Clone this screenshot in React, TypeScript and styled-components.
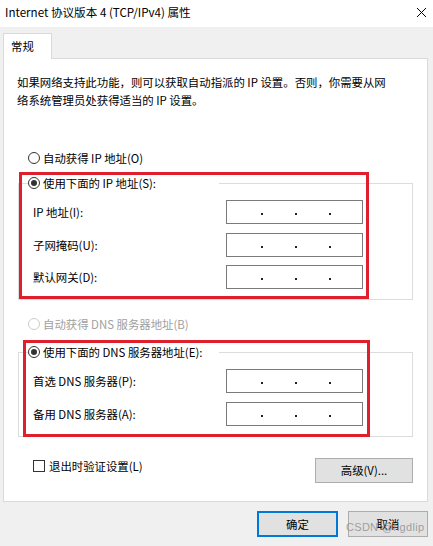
import React from "react";
import styled, { createGlobalStyle } from "styled-components";

const FONT = `"Noto Sans CJK SC", "Noto Sans", sans-serif`;

const GlobalStyle = createGlobalStyle`
  html, body {
    margin: 0;
    padding: 0;
    background: #f0f0f0;
  }
  body {
    font-family: ${FONT};
    font-size: 11.4px;
    color: #000;
  }
`;

type Box = { $x: number; $y: number; $w: number; $h: number };

const IP_ROWS = ["IP 地址(I):", "子网掩码(U):", "默认网关(D):"];
const DNS_ROWS = ["首选 DNS 服务器(P):", "备用 DNS 服务器(A):"];

const CloseIcon = () => (
  <svg width="11" height="11" viewBox="0 0 11 11">
    <path d="M1 1 L10 10 M10 1 L1 10" stroke="#000" strokeWidth="1" fill="none" />
  </svg>
);

const Radio = ({ checked, disabled }: { checked?: boolean; disabled?: boolean }) => (
  <RadioCircle $disabled={disabled}>{checked && <RadioDot />}</RadioCircle>
);

const IpInput = () => (
  <IpBox>
    <Octet />
    <Dot />
    <Octet />
    <Dot />
    <Octet />
    <Dot />
    <Octet />
  </IpBox>
);

const AddressGroup = ({
  legend,
  rows,
  mark
}: {
  legend: string;
  rows: string[];
  mark: Box;
}) => (
  <Section>
    <Group>
      <Legend>
        <Radio checked />
        <OptionText>{legend}</OptionText>
      </Legend>
      <Rows>
        {rows.map(label => (
          <Field key={label}>
            <FieldLabel>{label}</FieldLabel>
            <IpInput />
          </Field>
        ))}
      </Rows>
    </Group>
    <Highlight $x={mark.$x} $y={mark.$y} $w={mark.$w} $h={mark.$h} />
  </Section>
);

export default function App() {
  return (
    <>
      <GlobalStyle />
      <Window>
        <TitleBar>
          <Title>Internet 协议版本 4 (TCP/IPv4) 属性</Title>
          <CloseButton>
            <CloseIcon />
          </CloseButton>
        </TitleBar>

        <Body>
          <TabStrip>
            <Tab>常规</Tab>
          </TabStrip>

          <Panel>
            <Description>
              如果网络支持此功能，则可以获取自动指派的 IP 设置。否则，你需要从网
              <br />
              络系统管理员处获得适当的 IP 设置。
            </Description>

            <Option $top={41}>
              <Radio />
              <OptionText>自动获得 IP 地址(O)</OptionText>
            </Option>

            <Spacer $h={9} />
            <AddressGroup
              legend="使用下面的 IP 地址(S):"
              rows={IP_ROWS}
              mark={{ $x: 1, $y: -3, $w: 350, $h: 127 }}
            />

            <Option $top={16}>
              <Radio disabled />
              <OptionText $disabled>自动获得 DNS 服务器地址(B)</OptionText>
            </Option>

            <Spacer $h={12} />
            <AddressGroup
              legend="使用下面的 DNS 服务器地址(E):"
              rows={DNS_ROWS}
              mark={{ $x: 5, $y: -4, $w: 347, $h: 97 }}
            />

            <FooterRow>
              <CheckLabel>
                <CheckBox />
                <span>退出时验证设置(L)</span>
              </CheckLabel>
              <Button $w={98}>高级(V)...</Button>
            </FooterRow>
          </Panel>

          <ButtonBar>
            <Button $w={81} $h={26} $primary>
              确定
            </Button>
            <Button $w={80} $h={26}>
              取消
            </Button>
          </ButtonBar>
        </Body>

        <Watermark>CSDN @hgdlip</Watermark>
      </Window>
    </>
  );
}

const Window = styled.div`
  position: relative;
  width: 433px;
  height: 546px;
  background: #f0f0f0;
  overflow: hidden;
`;

const TitleBar = styled.div`
  height: 27px;
  background: #fff;
  display: flex;
  align-items: center;
  justify-content: space-between;
  padding: 0 6px 0 5px;
  box-sizing: border-box;
`;

const Title = styled.div`
  font-size: 11.6px;
  line-height: 16px;
  margin-top: -3px;
`;

const CloseButton = styled.div`
  width: 11px;
  height: 11px;
  display: flex;
  margin-top: -2px;
`;

const Body = styled.div`
  padding: 6px 5px 0 3px;
`;

const TabStrip = styled.div`
  display: flex;
`;

const Tab = styled.div`
  position: relative;
  z-index: 1;
  width: 49px;
  height: 26px;
  box-sizing: border-box;
  background: #fff;
  border: 1px solid #d9d9d9;
  border-bottom: none;
  margin-bottom: -1px;
  padding-left: 7px;
  line-height: 24px;
`;

const Panel = styled.div`
  height: 444px;
  box-sizing: border-box;
  background: #fff;
  border: 1px solid #d9d9d9;
  padding: 14px 14px 0 13px;
  display: flex;
  flex-direction: column;
`;

const Description = styled.div`
  line-height: 18px;
  white-space: nowrap;
`;

const Spacer = styled.div<{ $h: number }>`
  height: ${p => p.$h}px;
  flex: none;
`;

const Option = styled.div<{ $top: number }>`
  display: flex;
  align-items: center;
  height: 16px;
  margin: ${p => p.$top}px 0 0 11px;
`;

const OptionText = styled.span<{ $disabled?: boolean }>`
  margin-left: 3px;
  line-height: 16px;
  white-space: nowrap;
  color: ${p => (p.$disabled ? "#a0a0a0" : "#000")};
`;

const RadioCircle = styled.span<{ $disabled?: boolean }>`
  width: 12px;
  height: 12px;
  box-sizing: border-box;
  border-radius: 50%;
  border: 1px solid ${p => (p.$disabled ? "#cccccc" : "#333")};
  background: #fff;
  display: flex;
  align-items: center;
  justify-content: center;
  flex: none;
`;

const RadioDot = styled.span`
  width: 6px;
  height: 6px;
  border-radius: 50%;
  background: #333;
`;

const Section = styled.div`
  position: relative;
  margin-left: 1px;
  width: 395px;
`;

const Group = styled.fieldset`
  margin: 0;
  padding: 0 0 10px 0;
  border: 1px solid #dcdcdc;
  min-width: 0;
`;

const Legend = styled.legend`
  display: flex;
  align-items: center;
  width: 191px;
  height: 16px;
  margin-left: 9px;
  padding: 0;
  background: #fff;
`;

const Rows = styled.div`
  display: flex;
  flex-direction: column;
  gap: 8.5px;
  padding: 9px 0 0 14px;
`;

const Field = styled.div`
  display: flex;
  align-items: center;
  height: 24px;
`;

const FieldLabel = styled.span`
  width: 193px;
  white-space: nowrap;
`;

const IpBox = styled.div`
  width: 137px;
  height: 24px;
  box-sizing: border-box;
  border: 1px solid #7a7a7a;
  background: #fff;
  display: flex;
  align-items: center;
  padding-left: 3px;
`;

const Octet = styled.span`
  flex: 1;
`;

const Dot = styled.span`
  width: 2px;
  height: 2px;
  margin: 4px 0.5px 0;
  background: #222;
`;

const Highlight = styled.div<Box>`
  position: absolute;
  left: ${p => p.$x}px;
  top: ${p => p.$y}px;
  width: ${p => p.$w}px;
  height: ${p => p.$h}px;
  box-sizing: border-box;
  border: 3px solid #e01f2c;
  pointer-events: none;
`;

const FooterRow = styled.div`
  display: flex;
  align-items: center;
  justify-content: space-between;
  margin-top: 21px;
  padding-left: 16px;
`;

const CheckLabel = styled.label`
  display: flex;
  align-items: center;
  gap: 4px;
  margin-top: -9px;
  white-space: nowrap;
`;

const CheckBox = styled.span`
  width: 12px;
  height: 12px;
  box-sizing: border-box;
  border: 1px solid #333;
  background: #fff;
`;

const Button = styled.div<{ $w: number; $h?: number; $primary?: boolean }>`
  width: ${p => p.$w}px;
  height: ${p => p.$h ?? 25}px;
  box-sizing: border-box;
  background: #e1e1e1;
  border: 1px solid ${p => (p.$primary ? "#0078d7" : "#adadad")};
  box-shadow: ${p => (p.$primary ? "inset 0 0 0 1px #0078d7" : "none")};
  display: flex;
  align-items: center;
  justify-content: center;
  white-space: nowrap;
`;

const ButtonBar = styled.div`
  display: flex;
  justify-content: flex-end;
  gap: 10px;
  margin-top: 9px;
`;

const Watermark = styled.div`
  position: absolute;
  left: 346px;
  top: 521px;
  font-family: "Liberation Sans", Arial, sans-serif;
  font-size: 11px;
  letter-spacing: 0.3px;
  color: rgba(140, 140, 140, 0.8);
  pointer-events: none;
`;
